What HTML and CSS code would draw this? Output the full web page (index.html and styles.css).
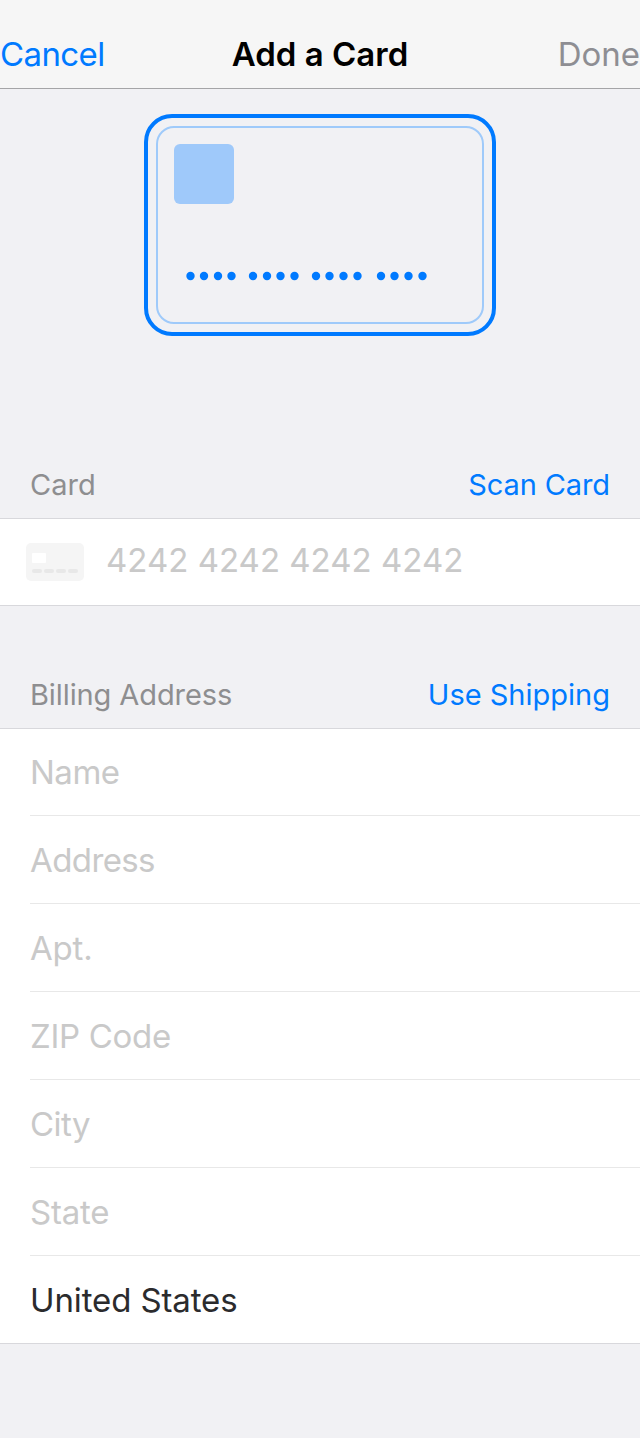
FILE: index.html
```html
<!DOCTYPE html>
<html lang="en">
<head>
<meta charset="utf-8">
<title>Add a Card</title>
<link rel="stylesheet" href="styles.css">
</head>
<body>
<header class="navbar">
  <span class="nav-action cancel">Cancel</span>
  <h1 class="nav-title">Add a Card</h1>
  <span class="nav-action done">Done</span>
</header>
<main>
  <div class="hero">
    <svg class="card-art" width="352" height="222" viewBox="0 0 352 222" fill="none">
      <rect x="2" y="2" width="348" height="218" rx="26" stroke="#007aff" stroke-width="4"/>
      <rect x="13" y="13" width="326" height="196" rx="17" stroke="#9fcafa" stroke-width="2"/>
      <rect x="30" y="30" width="60" height="60" rx="6" fill="#9fc9fa"/>
      <g fill="#007aff">
        <circle cx="46.5" cy="162" r="4.2"/><circle cx="60" cy="162" r="4.2"/><circle cx="74" cy="162" r="4.2"/><circle cx="87.5" cy="162" r="4.2"/>
        <circle cx="109" cy="162" r="4.2"/><circle cx="123" cy="162" r="4.2"/><circle cx="136.5" cy="162" r="4.2"/><circle cx="150.5" cy="162" r="4.2"/>
        <circle cx="172" cy="162" r="4.2"/><circle cx="185.5" cy="162" r="4.2"/><circle cx="199.5" cy="162" r="4.2"/><circle cx="213.5" cy="162" r="4.2"/>
        <circle cx="237" cy="162" r="4.2"/><circle cx="250.5" cy="162" r="4.2"/><circle cx="264.5" cy="162" r="4.2"/><circle cx="278.5" cy="162" r="4.2"/>
      </g>
    </svg>
  </div>
  <section>
    <div class="section-head"><h2 class="head-card">Card</h2><span class="link scan">Scan Card</span></div>
    <div class="group card-row">
      <svg class="card-icon" width="58" height="38" viewBox="0 0 58 38">
        <rect width="58" height="38" rx="5" fill="#f5f5f5"/>
        <rect x="6" y="10" width="14" height="10" rx="1" fill="#fff"/>
        <g fill="#e8e8e8"><rect x="6" y="26" width="10" height="4" rx="2"/><rect x="18" y="26" width="10" height="4" rx="2"/><rect x="30" y="26" width="10" height="4" rx="2"/><rect x="42" y="26" width="10" height="4" rx="2"/></g>
      </svg>
      <span class="number">4242 4242 4242 4242</span>
    </div>
  </section>
  <section class="billing">
    <div class="section-head"><h2 class="head-billing">Billing Address</h2><span class="link shipping">Use Shipping</span></div>
    <div class="group fields">
      <div class="field"><span class="name">Name</span></div>
      <div class="field"><span class="address">Address</span></div>
      <div class="field"><span class="apt">Apt.</span></div>
      <div class="field"><span class="zip">ZIP Code</span></div>
      <div class="field"><span class="city">City</span></div>
      <div class="field"><span class="state">State</span></div>
      <div class="field filled"><span class="country">United States</span></div>
    </div>
  </section>
</main>
</body>
</html>
```
FILE: styles.css
```css
* { box-sizing: border-box; }
body {
  margin: 0;
  min-height: 1438px;
  background: #f1f1f4;
  font-family: Inter, "Liberation Sans", sans-serif;
  color: #2b2b2d;
  white-space: nowrap;
}
h1, h2 { margin: 0; font-weight: 400; }
.navbar {
  display: grid;
  grid-template-columns: 1fr auto 1fr;
  height: 89px;
  padding-top: 20px;
  background: #f6f6f6;
  border-bottom: 1px solid #a5a5a7;
  font-size: 33px;
  line-height: 68px;
}
.nav-action { color: #007aff; }
.nav-title { font-size: 33px; font-weight: 600; color: #000; }
.cancel { letter-spacing: -0.6px; }
.nav-action.done { color: #8e8e93; text-align: right; }
.hero { display: flex; justify-content: center; height: 363px; padding-top: 25px; }
.section-head {
  display: flex;
  justify-content: space-between;
  height: 66px;
  padding: 0 30px;
  font-size: 29px;
  line-height: 65px;
}
.section-head h2 { font-size: 29px; color: #8e8e90; }
.head-billing, .scan { letter-spacing: -0.1px; }
.link { color: #007aff; }
.group { background: #fff; border-top: 1px solid #d8d8dc; border-bottom: 1px solid #d8d8dc; }
.card-row { display: flex; align-items: center; gap: 22px; height: 88px; padding-left: 26px; font-size: 33px; color: #c9c9c9; }
.number { padding-bottom: 4px; }
.billing { padding-top: 56px; }
.fields { padding-left: 30px; font-size: 33px; }
.field { height: 88px; line-height: 88px; border-bottom: 1px solid #e8e8e8; color: #c9c9c9; }
.field:first-child { height: 87px; line-height: 87px; }
.field:last-child { height: 87px; border-bottom: 0; }
.field.filled { color: #2b2b2d; }
.name { letter-spacing: -0.5px; }
.address { letter-spacing: -0.6px; }
.apt { letter-spacing: -0.2px; }
.zip { letter-spacing: -0.3px; }
.city { letter-spacing: -0.5px; }
.state { letter-spacing: -0.2px; }
.country { letter-spacing: -0.12px; }
```
